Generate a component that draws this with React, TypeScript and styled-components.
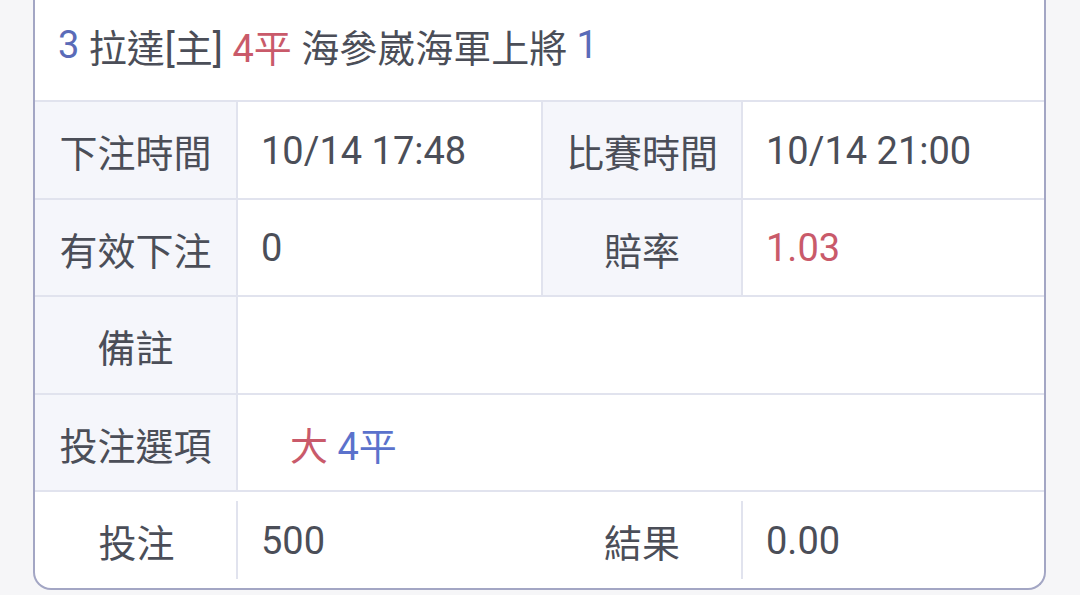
import React from 'react'
import styled, { createGlobalStyle } from 'styled-components'

const GlobalStyle = createGlobalStyle`
  html, body {
    margin: 0;
    padding: 0;
    background: #f6f6f8;
  }
  body {
    font-family: Roboto, "Noto Sans CJK TC", sans-serif;
    color: #4b4e58;
  }
`

const BLUE = '#5a6bb8'
const RED = '#c95a6a'

type Cell = {
  text?: string
  parts?: { text: string; color: string }[]
  color?: string
  label?: boolean
  span?: number
  indent?: number
  noDivider?: boolean
}

const ROWS: Cell[][] = [
  [
    { text: '下注時間', label: true },
    { text: '10/14 17:48' },
    { text: '比賽時間', label: true },
    { text: '10/14 21:00' },
  ],
  [
    { text: '有效下注', label: true },
    { text: '0' },
    { text: '賠率', label: true },
    { text: '1.03', color: RED },
  ],
  [{ text: '備註', label: true }, { text: '', span: 3 }],
  [
    { text: '投注選項', label: true },
    {
      parts: [
        { text: '大', color: RED },
        { text: ' 4平', color: '#5b72cc' },
      ],
      span: 3,
      indent: 52,
    },
  ],
]

const LAST_ROW: Cell[] = [
  { text: '投注', label: true },
  { text: '500' },
  { text: '結果', label: true, noDivider: true },
  { text: '0.00' },
]

export default function App() {
  return (
    <Page>
      <GlobalStyle />
      <Card>
        <Header>
          <Colored color={BLUE}>3</Colored> 拉達[主]{' '}
          <Colored color={RED}>4平</Colored> 海參崴海軍上將{' '}
          <Colored color={BLUE}>1</Colored>
        </Header>
        {ROWS.map((row, i) => (
          <Row key={i}>
            {row.map((cell, j) => (
              <TableCell
                key={j}
                $label={cell.label}
                $first={j === 0}
                $span={cell.span}
                $indent={cell.indent}
                style={cell.color ? { color: cell.color } : undefined}
              >
                <span>
                  {cell.parts
                    ? cell.parts.map((p) => (
                        <Colored key={p.text} color={p.color}>
                          {p.text}
                        </Colored>
                      ))
                    : cell.text}
                </span>
              </TableCell>
            ))}
          </Row>
        ))}
        <FooterRow>
          {LAST_ROW.map((cell, j) => (
            <FooterCell
              key={j}
              $label={cell.label}
              $divider={j !== 0 && !cell.noDivider}
            >
              {cell.text}
            </FooterCell>
          ))}
        </FooterRow>
      </Card>
    </Page>
  )
}

const Page = styled.div`
  padding: 0 34px 6px 33px;
`

const Card = styled.div`
  background: #fff;
  border: 2px solid #a3a6c4;
  border-top: none;
  border-radius: 0 0 18px 18px;
  overflow: hidden;
`

const Header = styled.div`
  height: 100px;
  box-sizing: border-box;
  display: flex;
  align-items: center;
  padding: 0 0 10px 23px;
  font-size: 38px;
  white-space: pre;
`

const Colored = styled.span<{ color: string }>`
  color: ${(p) => p.color};
  white-space: pre;
`

const Row = styled.div`
  display: grid;
  grid-template-columns: 201px 305px 200px 1fr;
  height: 97.5px;
  box-sizing: border-box;
  border-top: 2px solid #e1e3ee;
`

const TableCell = styled.div<{
  $label?: boolean
  $first?: boolean
  $span?: number
  $indent?: number
}>`
  display: flex;
  align-items: center;
  justify-content: ${(p) => (p.$label ? 'center' : 'flex-start')};
  padding: 2px 0 0 ${(p) => (p.$label ? 0 : p.$indent ?? 23)}px;
  font-size: 38px;
  background: ${(p) => (p.$label ? '#f5f6fb' : '#fff')};
  border-left: ${(p) => (p.$first ? 'none' : '2px solid #e1e3ee')};
  grid-column: ${(p) => (p.$span ? `span ${p.$span}` : 'auto')};
`

const FooterRow = styled.div`
  display: grid;
  grid-template-columns: 201px 305px 200px 1fr;
  height: 97.5px;
  box-sizing: border-box;
  border-top: 2px solid #e1e3ee;
  padding: 9px 0 9px;
`

const FooterCell = styled.div<{ $label?: boolean; $divider?: boolean }>`
  display: flex;
  align-items: center;
  justify-content: ${(p) => (p.$label ? 'center' : 'flex-start')};
  padding: 2px 0 0 ${(p) => (p.$label ? 0 : 23)}px;
  font-size: 38px;
  border-left: 2px solid ${(p) => (p.$divider ? '#e1e3ee' : 'transparent')};
`
